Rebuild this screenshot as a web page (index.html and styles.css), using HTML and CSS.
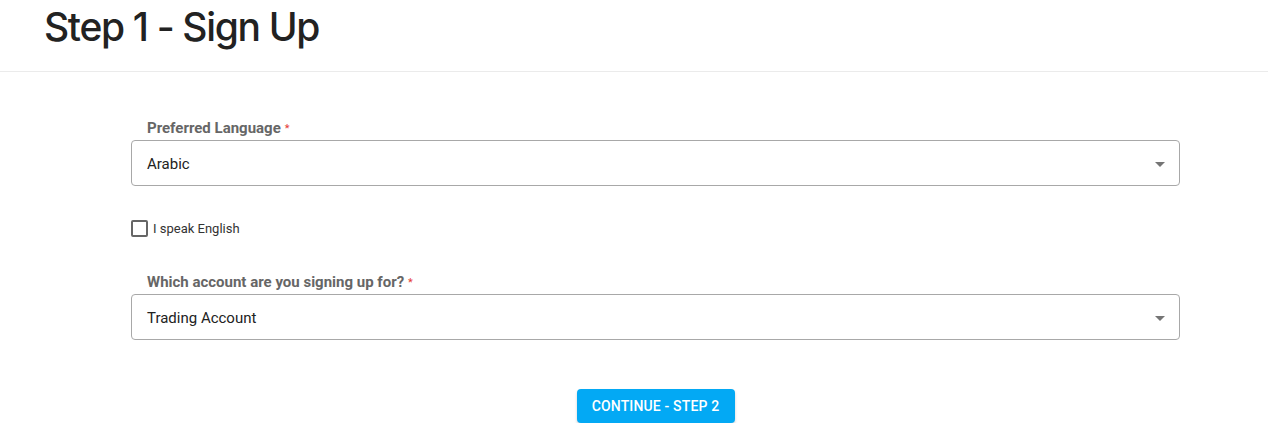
FILE: index.html
```html
<!DOCTYPE html>
<html>
<head>
<meta charset="utf-8">
<link rel="stylesheet" href="styles.css">
</head>
<body>
<header class="page-header">
  <h1 class="page-title">Step 1 - Sign Up</h1>
</header>
<main class="form-wrap">
  <div class="field">
    <label class="field-label">Preferred Language<span class="req">*</span></label>
    <div class="select">
      <span class="select-value">Arabic</span>
      <svg class="select-arrow" width="24" height="24" viewBox="0 0 24 24"><path d="M7 10l5 5 5-5z"/></svg>
    </div>
  </div>
  <label class="check-row">
    <span class="checkbox"></span>
    <span class="check-label">I speak English</span>
  </label>
  <div class="field field-second">
    <label class="field-label">Which account are you signing up for?<span class="req">*</span></label>
    <div class="select">
      <span class="select-value">Trading Account</span>
      <svg class="select-arrow" width="24" height="24" viewBox="0 0 24 24"><path d="M7 10l5 5 5-5z"/></svg>
    </div>
  </div>
  <div class="actions">
    <button class="btn-primary">Continue - Step 2</button>
  </div>
</main>
</body>
</html>
```
FILE: styles.css
```css
* { box-sizing: border-box; }
html, body { margin: 0; padding: 0; background: #fff; }
body { font-family: Roboto, "Liberation Sans", sans-serif; color: rgba(0,0,0,0.87); }

.page-header {
  height: 72px;
  border-bottom: 1px solid #ebebeb;
  padding-left: 44px;
}
.page-title {
  margin: 0;
  padding-top: 2px;
  font-family: Inter, Roboto, sans-serif;
  font-weight: 500;
  font-size: 39px;
  line-height: 50px;
  color: #222;
  letter-spacing: -1.35px;
}

.form-wrap {
  padding: 46px 88px 0 131px;
}
.field { display: flex; flex-direction: column; }
.field-label {
  font-size: 15px;
  font-weight: 700;
  line-height: 20px;
  color: #666;
  padding-left: 16px;
  margin-bottom: 1px;
}
.req { color: #e53935; font-size: 11px; margin-left: 4px; vertical-align: 1px; font-weight: 400; }

.select {
  height: 46px;
  border: 1px solid #a8a8a8;
  border-radius: 4px;
  display: flex;
  align-items: center;
  justify-content: space-between;
  padding: 1px 7px 0 15px;
}
.select-value { font-size: 15px; color: #222; }
.select-arrow { fill: #757575; }

.check-row {
  display: flex;
  align-items: center;
  gap: 5px;
  margin-top: 33px;
  height: 18px;
}
.checkbox {
  width: 17px;
  height: 17px;
  border: 2px solid #666;
  border-radius: 2px;
}
.check-label { font-size: 13px; color: #333; }

.field-second { margin-top: 35px; }

.actions {
  display: flex;
  justify-content: center;
  margin-top: 49px;
}
.btn-primary {
  font-family: Roboto, sans-serif;
  width: 158px;
  height: 34px;
  border: none;
  border-radius: 4px;
  background: #03a9f4;
  color: #fff;
  font-size: 14px;
  font-weight: 500;
  letter-spacing: 0.15px;
  text-transform: uppercase;
  box-shadow: 0 2px 3px rgba(0,0,0,0.18);
}
```
